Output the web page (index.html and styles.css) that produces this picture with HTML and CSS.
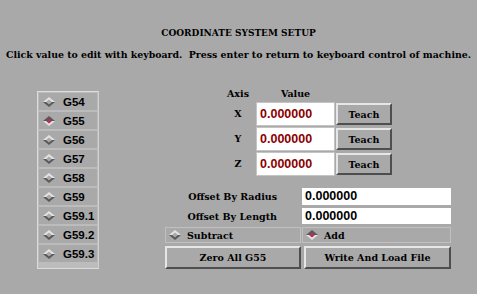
FILE: index.html
```html
<!DOCTYPE html>
<html>
<head>
<meta charset="utf-8">
<link rel="stylesheet" href="styles.css">
</head>
<body>
<div class="title">COORDINATE SYSTEM SETUP</div>
<div class="instr">Click value to edit with keyboard.&nbsp; Press enter to return to keyboard control of machine.</div>
<div class="main">
  <div class="glist">
    <div class="gitem"><svg class="dia" width="12" height="10" viewBox="0 0 12 10"><polygon points="6,0 12,5 0,5" fill="#e4e4e4"/><polygon points="0,5 12,5 6,10" fill="#585858"/><polygon points="6,2.5 9,5 6,7.5 3,5" fill="#a9a9a9"/></svg><span>G54</span></div>
    <div class="gitem"><svg class="dia" width="12" height="10" viewBox="0 0 12 10"><polygon points="6,0 12,5 0,5" fill="#585858"/><polygon points="0,5 12,5 6,10" fill="#e4e4e4"/><polygon points="6,2.5 9,5 6,7.5 3,5" fill="#b03060"/></svg><span>G55</span></div>
    <div class="gitem"><svg class="dia" width="12" height="10" viewBox="0 0 12 10"><polygon points="6,0 12,5 0,5" fill="#e4e4e4"/><polygon points="0,5 12,5 6,10" fill="#585858"/><polygon points="6,2.5 9,5 6,7.5 3,5" fill="#a9a9a9"/></svg><span>G56</span></div>
    <div class="gitem"><svg class="dia" width="12" height="10" viewBox="0 0 12 10"><polygon points="6,0 12,5 0,5" fill="#e4e4e4"/><polygon points="0,5 12,5 6,10" fill="#585858"/><polygon points="6,2.5 9,5 6,7.5 3,5" fill="#a9a9a9"/></svg><span>G57</span></div>
    <div class="gitem"><svg class="dia" width="12" height="10" viewBox="0 0 12 10"><polygon points="6,0 12,5 0,5" fill="#e4e4e4"/><polygon points="0,5 12,5 6,10" fill="#585858"/><polygon points="6,2.5 9,5 6,7.5 3,5" fill="#a9a9a9"/></svg><span>G58</span></div>
    <div class="gitem"><svg class="dia" width="12" height="10" viewBox="0 0 12 10"><polygon points="6,0 12,5 0,5" fill="#e4e4e4"/><polygon points="0,5 12,5 6,10" fill="#585858"/><polygon points="6,2.5 9,5 6,7.5 3,5" fill="#a9a9a9"/></svg><span>G59</span></div>
    <div class="gitem"><svg class="dia" width="12" height="10" viewBox="0 0 12 10"><polygon points="6,0 12,5 0,5" fill="#e4e4e4"/><polygon points="0,5 12,5 6,10" fill="#585858"/><polygon points="6,2.5 9,5 6,7.5 3,5" fill="#a9a9a9"/></svg><span>G59.1</span></div>
    <div class="gitem"><svg class="dia" width="12" height="10" viewBox="0 0 12 10"><polygon points="6,0 12,5 0,5" fill="#e4e4e4"/><polygon points="0,5 12,5 6,10" fill="#585858"/><polygon points="6,2.5 9,5 6,7.5 3,5" fill="#a9a9a9"/></svg><span>G59.2</span></div>
    <div class="gitem"><svg class="dia" width="12" height="10" viewBox="0 0 12 10"><polygon points="6,0 12,5 0,5" fill="#e4e4e4"/><polygon points="0,5 12,5 6,10" fill="#585858"/><polygon points="6,2.5 9,5 6,7.5 3,5" fill="#a9a9a9"/></svg><span>G59.3</span></div>
  </div>
  <div class="right">
    <div class="axes">
      <div class="hdr">Axis</div><div class="hdr">Value</div><div></div>
      <div class="ax">X</div><div class="val">0.000000</div><div class="btn">Teach</div>
      <div class="ax">Y</div><div class="val">0.000000</div><div class="btn">Teach</div>
      <div class="ax">Z</div><div class="val">0.000000</div><div class="btn">Teach</div>
    </div>
    <div class="offs">
      <div class="olabel">Offset By Radius</div><div class="ofield">0.000000</div>
      <div class="olabel">Offset By Length</div><div class="ofield">0.000000</div>
      <div class="radio"><svg class="dia" width="12" height="10" viewBox="0 0 12 10"><polygon points="6,0 12,5 0,5" fill="#e4e4e4"/><polygon points="0,5 12,5 6,10" fill="#585858"/><polygon points="6,2.5 9,5 6,7.5 3,5" fill="#a9a9a9"/></svg><span>Subtract</span></div>
      <div class="radio"><svg class="dia" width="12" height="10" viewBox="0 0 12 10"><polygon points="6,0 12,5 0,5" fill="#585858"/><polygon points="0,5 12,5 6,10" fill="#e4e4e4"/><polygon points="6,2.5 9,5 6,7.5 3,5" fill="#b03060"/></svg><span>Add</span></div>
      <div class="btn big">Zero All G55</div><div class="btn big">Write And Load File</div>
    </div>
  </div>
</div>
</body>
</html>
```

FILE: styles.css
```css
html, body {
  margin: 0;
  padding: 0;
}
body {
  width: 477px;
  height: 294px;
  background: #a9a9a9;
  color: #000;
  font-family: "DejaVu Serif", serif;
  font-weight: bold;
  overflow: hidden;
}
.title {
  padding-top: 27px;
  height: 12px;
  line-height: 12px;
  font-size: 9px;
  text-align: center;
}
.instr {
  margin-top: 9px;
  height: 13px;
  line-height: 13px;
  font-size: 9.4px;
  text-align: center;
  white-space: nowrap;
}
.main {
  margin-top: 27px;
  display: flex;
}
.glist {
  margin-left: 37px;
  margin-top: 3px;
  width: 58px;
  border: 1px solid #dcdcdc;
  border-right-color: #d0d0d0;
  padding: 1px;
  display: flex;
  flex-direction: column;
  gap: 2px;
  background: #bcbcbc;
}
.gitem {
  height: 17px;
  background: #a9a9a9;
  display: flex;
  align-items: center;
  padding-left: 4px;
  font-family: "Liberation Sans", sans-serif;
  font-size: 11.5px;
}
.gitem .dia {
  margin-right: 8px;
}
.right {
  margin-left: 66px;
  display: flex;
  flex-direction: column;
}
.axes {
  margin-left: 56px;
  display: grid;
  grid-template-columns: 34px 77px 56px;
  grid-template-rows: 12px 22px 22px 22px;
  column-gap: 2px;
  row-gap: 3px;
  font-size: 9.5px;
}
.hdr {
  text-align: center;
  line-height: 12px;
}
.ax {
  text-align: center;
  line-height: 22px;
}
.val {
  background: #fff;
  outline: 1px solid #c4c4c4;
  color: #8b0000;
  font-family: "Liberation Sans", sans-serif;
  font-size: 12.5px;
  line-height: 22px;
  padding-left: 3px;
}
.btn {
  box-sizing: border-box;
  border: 2px solid;
  border-color: #e6e6e6 #4e4e4e #4e4e4e #e6e6e6;
  background: #a9a9a9;
  display: flex;
  align-items: center;
  justify-content: center;
  font-size: 9.5px;
}
.offs {
  margin-top: 13px;
  display: grid;
  grid-template-columns: 136px 149px;
  grid-template-rows: 17px 16px 16px 23px;
  column-gap: 1px;
  row-gap: 3px;
  font-size: 9.5px;
}
.olabel {
  text-align: right;
  padding-right: 24px;
  line-height: 17px;
}
.ofield {
  background: #fff;
  font-family: "Liberation Sans", sans-serif;
  font-size: 12.5px;
  line-height: 17px;
  padding-left: 3px;
}
.radio {
  box-sizing: border-box;
  border: 1px solid #c0c0c0;
  display: flex;
  align-items: center;
  padding-left: 3px;
}
.radio .dia {
  margin-right: 6px;
}
.offs .btn + .btn {
  margin-left: 2px;
}
```
